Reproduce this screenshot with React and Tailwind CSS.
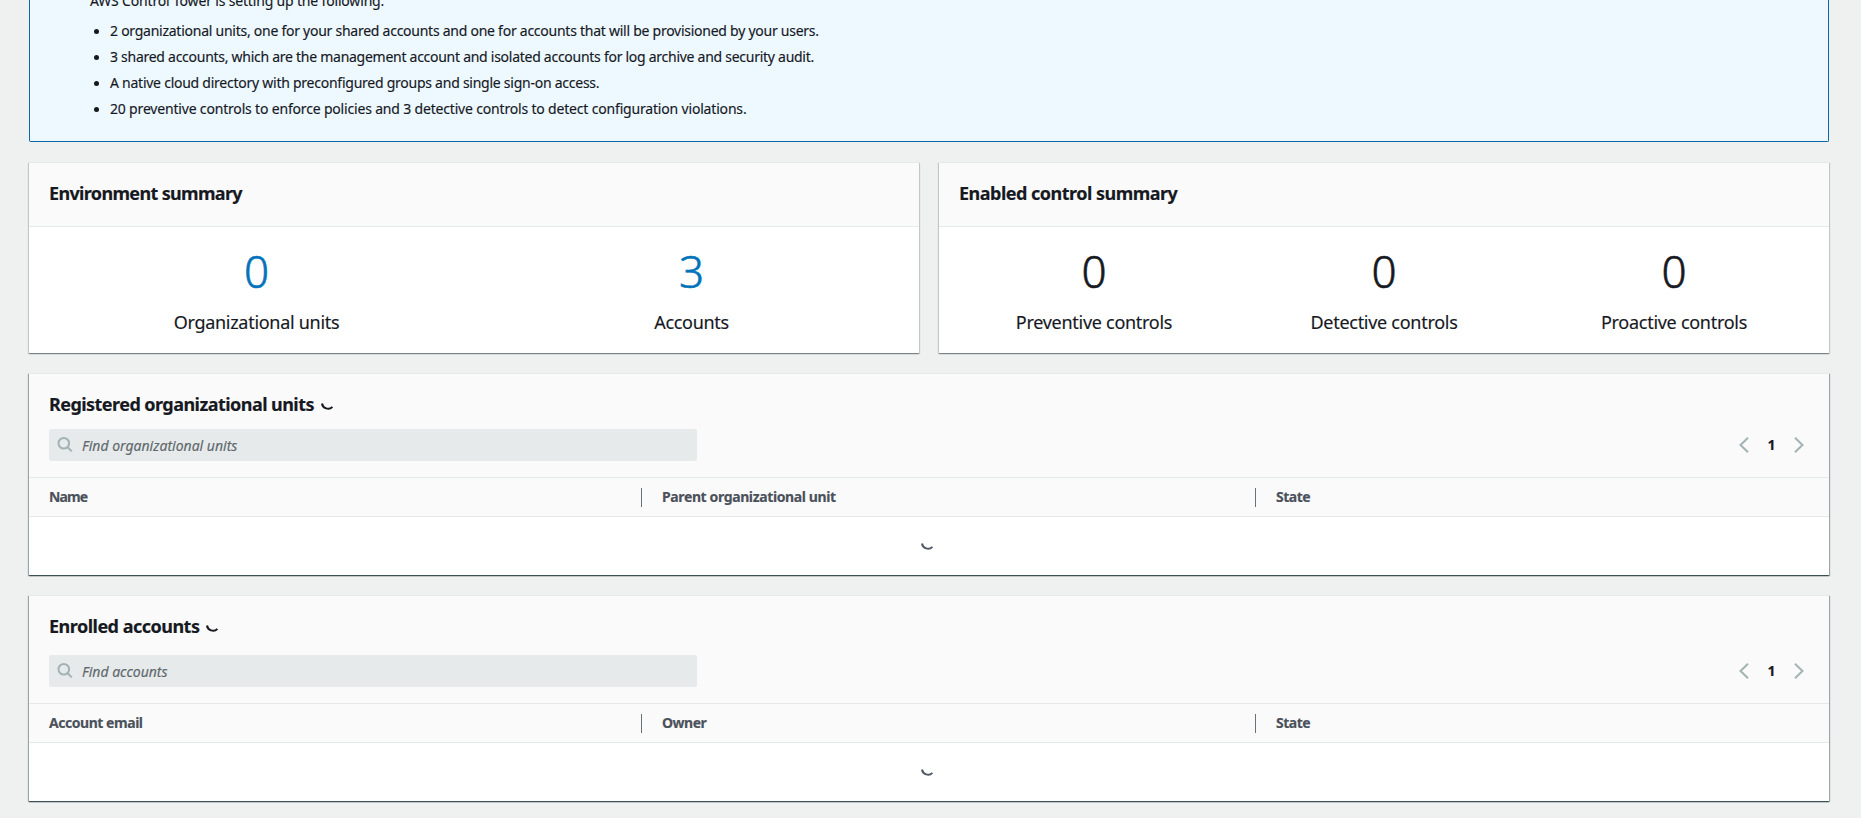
const CARD_SHADOW =
  "shadow-[0_1px_1px_0_rgba(0,28,36,0.3),1px_1px_1px_0_rgba(0,28,36,0.15),-1px_1px_1px_0_rgba(0,28,36,0.15)]";

function Spinner({ className }) {
  return (
    <svg className={className} width="14" height="14" viewBox="0 0 14 14" fill="none" stroke="currentColor" strokeWidth="2">
      <path d="M2 6.5 C2.6 11.2 8.8 13.8 12.4 9.8" />
    </svg>
  );
}

function SearchIcon() {
  return (
    <svg className="shrink-0 text-[#a3b3b4]" width="16" height="16" viewBox="0 0 16 16" fill="none" stroke="currentColor" strokeWidth="2">
      <circle cx="6.8" cy="6.3" r="5.3" />
      <path d="M10.4 10 L14.8 14.4" />
    </svg>
  );
}

function Chevron({ dir }) {
  return (
    <svg className="text-[#a3b3b4]" width="16" height="18" viewBox="0 0 16 18" fill="none" stroke="currentColor" strokeWidth="2">
      <path d={dir === "left" ? "M12 1.7 L4.5 9 L12 16.3" : "M4 1.7 L11.5 9 L4 16.3"} />
    </svg>
  );
}

function Info() {
  return (
    <section className="mr-8 ml-[29px] h-[142px] overflow-hidden rounded-b-[2px] border border-t-0 border-[#0a67a8] bg-[#edf8ff] pl-[60px]">
      <p className="-mt-[9px] h-5 leading-5 tracking-[-0.17px]">AWS Control Tower is setting up the following:</p>
      <ul className="mt-[10px] flex flex-col gap-[6px] leading-5">
        {[
          ["2 organizational units, one for your shared accounts and one for accounts that will be provisioned by your users.", "tracking-[-0.255px]"],
          ["3 shared accounts, which are the management account and isolated accounts for log archive and security audit.", "tracking-[-0.27px]"],
          ["A native cloud directory with preconfigured groups and single sign-on access.", "tracking-[-0.25px]"],
          ["20 preventive controls to enforce policies and 3 detective controls to detect configuration violations.", "tracking-[-0.178px]"],
        ].map(([text, tracking]) => (
          <li key={text} className="flex items-center">
            <span className="ml-1 mr-[11px] size-[5px] rounded-full bg-[#16191f]" />
            <span className={tracking}>{text}</span>
          </li>
        ))}
      </ul>
    </section>
  );
}

function Summary({ title, tracking, stats, color }) {
  return (
    <section className={`flex-1 bg-white ${CARD_SHADOW}`}>
      <header className="h-[65px] border-y border-[#e6e9e9] bg-[#fafafa] px-5 pt-[19px]">
        <h2 className={`text-[18px] leading-[22px] font-bold ${tracking}`}>{title}</h2>
      </header>
      <div className="flex h-[126px] px-[10px] pt-[14px]">
        {stats.map(([value, label, labelTracking]) => (
          <div key={label} className="flex-1 text-center">
            <div className={`h-[60px] text-[44px] leading-[60px] font-light [-webkit-text-stroke:0.6px] ${color}`}>{value}</div>
            <div className={`mt-[10px] text-[18px] leading-[22px] ${labelTracking}`}>{label}</div>
          </div>
        ))}
      </div>
    </section>
  );
}

function TableCard({ title, tracking, placeholder, placeholderTracking, columns, searchGap }) {
  return (
    <section className={`bg-white ${CARD_SHADOW}`}>
      <div className={CARD_SHADOW}>
        <header className="border-y border-[#e6e9e9] bg-[#fafafa] px-5 pt-[19px] pb-4">
          <div className="flex h-[22px] items-center">
            <h2 className={`text-[18px] leading-[22px] font-bold ${tracking}`}>{title}</h2>
            <Spinner className="ml-[6px]" />
          </div>
          <div className={`flex items-center justify-between ${searchGap}`}>
            <div className="flex h-8 w-[648px] items-center rounded-[2px] bg-[#e6eaea] pl-2">
              <SearchIcon />
              <span className={`ml-[9px] pt-[2px] text-[#5f686d] italic ${placeholderTracking}`}>{placeholder}</span>
            </div>
            <div className="mr-[2px] flex items-center">
              <Chevron dir="left" />
              <span className="w-[39px] text-center font-bold">1</span>
              <Chevron dir="right" />
            </div>
          </div>
        </header>
        <div className="flex h-[39px] items-center border-b border-[#e6e9e9] bg-[#fafafa] font-bold text-[#4b515b]">
          {columns.map(([name, width, t], i) => (
            <div key={name} className={`flex h-[19px] items-center pl-5 ${width} ${i < 2 ? "border-r border-[#687078]" : ""}`}>
              <span className={t}>{name}</span>
            </div>
          ))}
        </div>
        <div className="flex h-[58px] items-center pb-1 pl-[891px] text-[#545b64]">
          <Spinner className="" />
        </div>
      </div>
    </section>
  );
}

export default function App() {
  return (
    <div className="h-[818px] overflow-hidden bg-[#eff1f1] font-['Noto_Sans',sans-serif] text-[14px] leading-5 text-[#16191f] [-webkit-text-stroke:0.15px]">
      <Info />
      <main className="flex flex-col gap-5 pt-5 pr-8 pl-[29px]">
        <div className="flex gap-5">
          <Summary
            title="Environment summary"
            tracking="tracking-[-0.66px]"
            color="text-[#0073bb]"
            stats={[["0", "Organizational units", "tracking-[-0.29px]"], ["3", "Accounts", "tracking-[-0.33px]"]]}
          />
          <Summary
            title="Enabled control summary"
            tracking="tracking-[-0.51px]"
            color="text-[#16191f]"
            stats={[
              ["0", "Preventive controls", "tracking-[-0.28px]"],
              ["0", "Detective controls", "tracking-[-0.28px]"],
              ["0", "Proactive controls", "tracking-[-0.28px]"],
            ]}
          />
        </div>
        <TableCard
          title="Registered organizational units"
          tracking="tracking-[-0.55px]"
          placeholder="Find organizational units"
          placeholderTracking="tracking-[0px]"
          searchGap="mt-[14px]"
          columns={[["Name", "w-[613px]", "tracking-[-0.9px]"], ["Parent organizational unit", "w-[614px]", "tracking-[-0.38px]"], ["State", "", "tracking-[-0.5px]"]]}
        />
        <TableCard
          title="Enrolled accounts"
          tracking="tracking-[-0.51px]"
          placeholder="Find accounts"
          placeholderTracking="tracking-[0px]"
          searchGap="mt-[18px]"
          columns={[["Account email", "w-[613px]", "tracking-[-0.46px]"], ["Owner", "w-[614px]", "tracking-[-0.5px]"], ["State", "", "tracking-[-0.5px]"]]}
        />
      </main>
    </div>
  );
}
